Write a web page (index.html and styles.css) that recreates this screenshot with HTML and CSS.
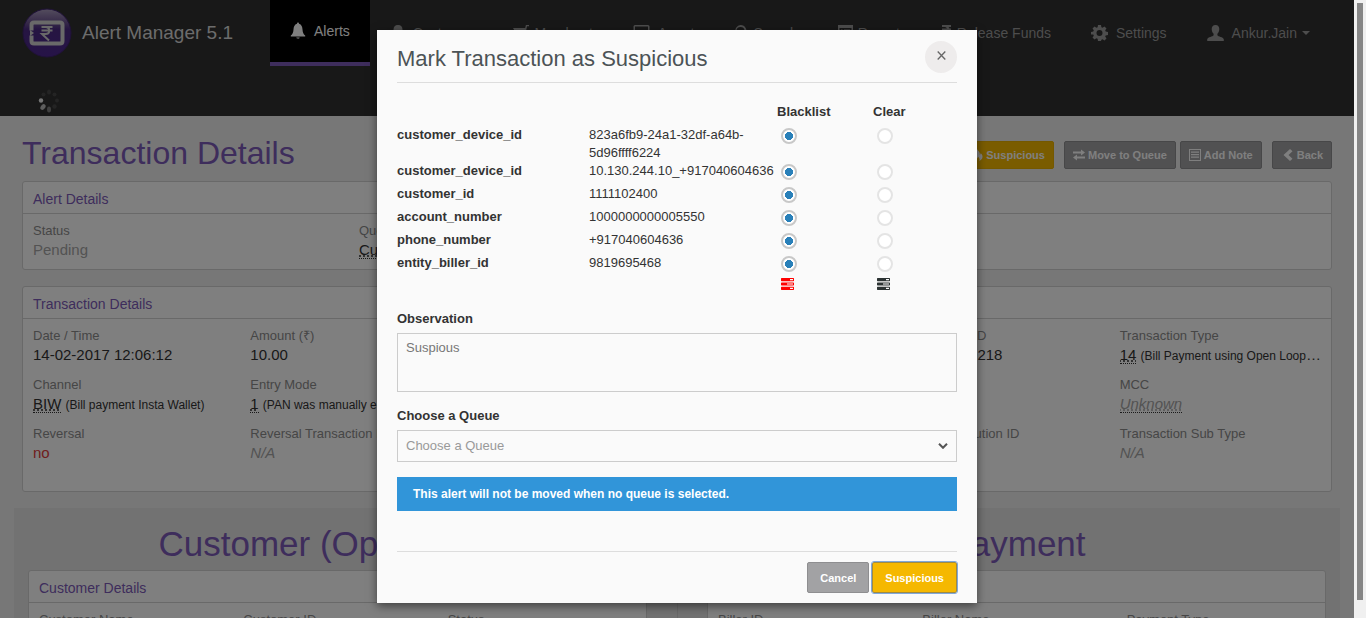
FILE: index.html
```html
<!DOCTYPE html>
<html lang="en">
<head>
<meta charset="utf-8">
<meta name="viewport" content="width=device-width, initial-scale=1">
<title>Alert Manager 5.1</title>
<link rel="stylesheet" href="styles.css">
</head>
<body>
<div class="screen">
  <div class="app">
    <header class="topbar">
      <div class="topbar-row">
        <a class="brand" href="#">
          <svg width="50" height="50" viewBox="0 0 50 50" aria-hidden="true">
            <defs><linearGradient id="orb" x1="0" y1="0" x2="0" y2="1"><stop offset="0" stop-color="#a99bbd"/><stop offset=".3" stop-color="#6a5090"/><stop offset=".42" stop-color="#4c2b84"/><stop offset="1" stop-color="#4d2790"/></linearGradient></defs>
            <circle cx="25" cy="25" r="24" fill="url(#orb)" stroke="#3f2370"/>
            <path d="M9.500 22.500V17q0-2.500 2.500-2.500h26q2.500 0 2.500 2.500v16q0 2.500-2.500 2.500H12q-2.500 0-2.500-2.500v-5.500" fill="none" stroke="#d2d2d2" stroke-width="4"/>
            <path d="M8 22l4 3-4 3z" fill="#d2d2d2"/>
            <path d="M19.500 19h11M19.500 22.500h11M20 19h3.500c5 0 5 7 0 7H20l7 6.500" fill="none" stroke="#d2d2d2" stroke-width="2"/>
          </svg>
          <span>Alert Manager 5.1</span>
        </a>
        <nav class="nav">
          <a class="nav-item active" href="#"><svg width="16" height="18" viewBox="0 0 16 18"><path d="M8 0.500c.8 0 1 .7 1 1.200 2.600.8 3.300 3 3.500 5.800.2 3 .8 4.600 2.700 6v1H.8v-1c1.900-1.400 2.500-3 2.700-6C3.700 4.700 4.400 2.500 7 1.700c0-.5.200-1.200 1-1.200zM6.300 15.500h3.400c-.3 1.600-3.100 1.600-3.400 0z"/></svg>Alerts</a>
          <a class="nav-item" href="#"><svg width="15" height="18" viewBox="0 0 15 18"><path d="M8 1c3 0 4.500 2 4.500 4.500S11 10 10 11v2l5 2v2H1v-2l5-2v-2C5 10 3.500 8 3.500 5.500S5 1 8 1z"/></svg>Customer</a>
          <a class="nav-item snug" href="#"><svg width="16" height="18" viewBox="0 0 16 18"><path d="M16 1v1.300h-2L12 12H3v-1.300h7.500l.3-1.400H3L0 4h12.200l.7-3zM4 14h2v2H4zM9 14h2v2H9z"/></svg>Merchant</a>
          <a class="nav-item" href="#"><svg width="17" height="18" viewBox="0 0 17 18"><path d="M2 1h13q1.500 0 1.500 1.500V12h-16V2.500Q.5 1 2 1zm0 1.500v8h13v-8zM0 13h17v2H0z"/></svg>Agent</a>
          <a class="nav-item snug" href="#"><svg width="14" height="18" viewBox="0 0 14 18"><path d="M6.500 1a6 6 0 0 1 5 9.300l3 4-1.700 1.700-3.500-3.400A6 6 0 1 1 6.500 1zm0 2a4 4 0 1 0 0 8 4 4 0 0 0 0-8z"/></svg>Search</a>
          <a class="nav-item snug" href="#"><svg width="15" height="18" viewBox="0 0 15 18"><path fill-rule="evenodd" d="M0 1h15v14H0zM1.500 4v9.500h12V4zM3 5.500h1.500V7H3zm3 0h6V7H6zM3 8.500h1.500V10H3zm3 0h6V10H6z"/></svg>Report</a>
          <a class="nav-item snug" href="#"><svg width="12" height="18" viewBox="0 0 12 18"><path d="M2 1h9v2H8.600q.6.700.8 1.500H11v2H9.300Q8.500 9 5.500 9.200l4.500 5H7L2 9V7.200h3q1.500 0 2-.7H2v-2h5Q6.400 3 5 3H2z"/></svg>Release Funds</a>
          <a class="nav-item" href="#"><svg width="17" height="18" viewBox="0 0 17 18"><path fill-rule="evenodd" d="M7 1h3l.4 2.200 1.200.5 1.900-1.300 2 2-1.300 1.900.5 1.200 2.300.5v3l-2.300.4-.5 1.200 1.300 1.900-2 2-1.900-1.300-1.200.5L10 17H7l-.4-2.200-1.200-.5-1.900 1.300-2-2 1.300-1.900-.5-1.200L0 10.500V8l2.300-.5.5-1.200-1.300-1.900 2-2 1.900 1.300 1.200-.5zM8.500 6a3 3 0 1 0 0 6 3 3 0 0 0 0-6z"/></svg>Settings</a>
          <a class="nav-item" href="#"><svg width="17" height="18" viewBox="0 0 17 18"><path d="M8.500 1c2.700 0 3.800 1.800 3.800 4 0 2.400-1 3.700-1.900 4.800v1.400c.8 1.400 5.600 1.700 6.400 4V17H.2v-1.800c.8-2.300 5.600-2.600 6.400-4V9.800C5.700 8.700 4.700 7.400 4.700 5c0-2.200 1.100-4 3.800-4z"/></svg>Ankur.Jain<span class="caret"></span></a>
        </nav>
      </div>
      <svg class="loader" width="22" height="24" viewBox="0 0 22 24" aria-label="Loading">
        <g fill="#484848"><ellipse cx="11" cy="3" rx="2" ry="2.500"/><circle cx="5.500" cy="5.500" r="2"/><circle cx="16.500" cy="5.500" r="2"/><circle cx="19" cy="11.500" r="2"/><circle cx="16.500" cy="17.500" r="2.200"/></g>
        <ellipse cx="11" cy="20.500" rx="2" ry="3" fill="#808080"/><ellipse cx="5" cy="18" rx="2.200" ry="3.200" transform="rotate(35 5 18)" fill="#bdbdbd"/><circle cx="3" cy="11.500" r="2.200" fill="#eee"/>
      </svg>
    </header>

    <main class="page">
      <div class="page-head">
        <h1>Transaction Details</h1>
        <div class="actions">
          <button class="btn btn-warn" type="button"><svg width="12" height="12" viewBox="0 0 12 12"><path d="M6 0c1 2 3.500 3 2.600 6 .9-.3 1.100-1.200 1-2C13 7 11.500 11 8 12c1.500-2 0-3-1-4.500C7 9 5 9.500 5.500 12 1 11 0 8 2 5c.2 1 .6 1.500 1.300 1.800C3 4 6 3 6 0z"/></svg>Suspicious</button>
          <button class="btn spaced" type="button"><svg width="12" height="12" viewBox="0 0 12 12"><path d="M0 2.500h8V.5l4 3-4 3v-2H0zM12 9.500H4v2l-4-3 4-3v2h8z"/></svg>Move to Queue</button>
          <button class="btn" type="button"><svg width="12" height="12" viewBox="0 0 12 12"><path fill-rule="evenodd" d="M0 0h12v12H0zM1 1v10h10V1zM2 2.500h8v1.200H2zM2 5h8v1.200H2zM2 7.500h8v1.200H2z"/></svg>Add Note</button>
          <button class="btn spaced" type="button"><svg width="13" height="12" viewBox="-2 0 13 12"><path d="M7 0l2.500 2.300L5.500 6l4 3.700L7 12 .5 6z"/></svg>Back</button>
        </div>
      </div>

      <section class="panel">
        <h2>Alert Details</h2>
        <dl class="fields four">
          <div><dt>Status</dt><dd class="muted">Pending</dd></div>
          <div><dt>Queue</dt><dd><abbr>Customer</abbr></dd></div>
        </dl>
      </section>

      <section class="panel tall">
        <h2>Transaction Details</h2>
        <dl class="fields six">
          <div><dt>Date / Time</dt><dd>14-02-2017 12:06:12</dd></div>
          <div><dt>Amount (₹)</dt><dd>10.00</dd></div>
          <div class="at-five"><dt>Transaction ID</dt><dd>704512000218</dd></div>
          <div><dt>Transaction Type</dt><dd><abbr>14</abbr> <small>(Bill Payment using Open Loop Wallet)</small></dd></div>
          <div><dt>Channel</dt><dd><abbr>BIW</abbr> <small>(Bill payment Insta Wallet)</small></dd></div>
          <div><dt>Entry Mode</dt><dd><abbr>1</abbr> <small>(PAN was manually entered)</small></dd></div>
          <div class="at-six"><dt>MCC</dt><dd class="muted"><abbr><i>Unknown</i></abbr></dd></div>
          <div><dt>Reversal</dt><dd class="no">no</dd></div>
          <div><dt>Reversal Transaction ID</dt><dd class="muted"><i>N/A</i></dd></div>
          <div class="at-five"><dt>Issuing Institution ID</dt></div>
          <div><dt>Transaction Sub Type</dt><dd class="muted"><i>N/A</i></dd></div>
        </dl>
      </section>

      <div class="parties">
        <section class="party">
          <h3>Customer (Open Loop)</h3>
          <div class="panel">
            <h2>Customer Details</h2>
            <dl class="fields three">
              <div><dt>Customer Name</dt></div><div><dt>Customer ID</dt></div><div><dt>Status</dt></div>
            </dl>
          </div>
        </section>
        <section class="party">
          <h3>Payment</h3>
          <div class="panel">
            <h2>Biller Details</h2>
            <dl class="fields three">
              <div><dt>Biller ID</dt></div><div><dt>Biller Name</dt></div><div><dt>Payment Type</dt></div>
            </dl>
          </div>
        </section>
      </div>
    </main>

    <div class="backdrop">
      <form class="modal" role="dialog" aria-labelledby="dialog-title">
        <div class="modal-head">
          <h2 id="dialog-title">Mark Transaction as Suspicious</h2>
          <button class="close" type="button" aria-label="Close"><svg width="9" height="9" viewBox="0 0 9 9"><path d="M.7.500l7.600 8M8.300.500l-7.600 8" fill="none" stroke="#666" stroke-width="1.300"/></svg></button>
        </div>
        <table class="entities">
          <colgroup><col class="c-name"><col class="c-value"><col class="c-black"><col></colgroup>
          <thead><tr><td></td><td></td><th scope="col">Blacklist</th><th scope="col">Clear</th></tr></thead>
          <tbody>
            <tr><th scope="row">customer_device_id</th><td>823a6fb9-24a1-32df-a64b-5d96ffff6224</td><td class="pick"><input type="radio" name="e1" aria-label="Blacklist first customer_device_id" checked></td><td class="pick"><input type="radio" name="e1" aria-label="Clear first customer_device_id"></td></tr>
            <tr><th scope="row">customer_device_id</th><td>10.130.244.10_+917040604636</td><td class="pick"><input type="radio" name="e2" aria-label="Blacklist second customer_device_id" checked></td><td class="pick"><input type="radio" name="e2" aria-label="Clear second customer_device_id"></td></tr>
            <tr><th scope="row">customer_id</th><td>1111102400</td><td class="pick"><input type="radio" name="e3" aria-label="Blacklist customer_id" checked></td><td class="pick"><input type="radio" name="e3" aria-label="Clear customer_id"></td></tr>
            <tr><th scope="row">account_number</th><td>1000000000005550</td><td class="pick"><input type="radio" name="e4" aria-label="Blacklist account_number" checked></td><td class="pick"><input type="radio" name="e4" aria-label="Clear account_number"></td></tr>
            <tr><th scope="row">phone_number</th><td>+917040604636</td><td class="pick"><input type="radio" name="e5" aria-label="Blacklist phone_number" checked></td><td class="pick"><input type="radio" name="e5" aria-label="Clear phone_number"></td></tr>
            <tr><th scope="row">entity_biller_id</th><td>9819695468</td><td class="pick"><input type="radio" name="e6" aria-label="Blacklist entity_biller_id" checked></td><td class="pick"><input type="radio" name="e6" aria-label="Clear entity_biller_id"></td></tr>
          </tbody>
          <tfoot><tr><td></td><td></td>
            <td class="all"><button class="all-red" type="button" aria-label="Blacklist all"><svg width="13" height="12" viewBox="0 0 13 12"><path fill-rule="evenodd" d="M.5 0h12l.5.500v2.200l-.5.500H.5L0 2.700V.5zM9 1v1.200h3V1zM.5 4.400h12l.5.500v2.200l-.5.500H.5L0 7.100V4.900zM6 5.400v1.200h6V5.400zM.5 8.800h12l.5.500v2.200l-.5.500H.5l-.5-.5V9.300zM9 9.800V11h3V9.800z"/></svg></button></td>
            <td class="all"><button type="button" aria-label="Clear all"><svg width="13" height="12" viewBox="0 0 13 12"><path fill-rule="evenodd" d="M.5 0h12l.5.500v2.200l-.5.500H.5L0 2.700V.5zM9 1v1.200h3V1zM.5 4.400h12l.5.500v2.200l-.5.500H.5L0 7.100V4.900zM6 5.400v1.200h6V5.400zM.5 8.800h12l.5.500v2.200l-.5.500H.5l-.5-.5V9.300zM9 9.800V11h3V9.800z"/></svg></button></td>
          </tr></tfoot>
        </table>
        <label for="observation">Observation</label>
        <textarea id="observation">Suspious</textarea>
        <label for="queue">Choose a Queue</label>
        <div class="select-box">
          <select id="queue"><option>Choose a Queue</option></select>
          <svg width="10" height="6" viewBox="0 0 10 6" aria-hidden="true"><path d="M1 .8l4 4 4-4" fill="none" stroke="#555" stroke-width="2"/></svg>
        </div>
        <p class="notice">This alert will not be moved when no queue is selected.</p>
        <div class="modal-foot">
          <button class="btn big" type="button">Cancel</button>
          <button class="btn big btn-warn focused" type="submit">Suspicious</button>
        </div>
      </form>
    </div>
  </div>
  <div class="scroll-track"><div class="scroll-thumb"></div></div>
</div>
</body>
</html>
```

FILE: styles.css
```css
* { box-sizing: border-box; }

body {
  margin: 0;
  font-family: "Liberation Sans", Arial, sans-serif;
  font-size: 13px;
  line-height: 18px;
  color: #333;
}

h1, h2, h3, dl, dd, p { margin: 0; font-weight: normal; }
a { color: inherit; text-decoration: none; }
button, textarea, select { font: inherit; }

.screen { display: flex; height: 100vh; }
.app { position: relative; flex: 1; min-width: 0; overflow: hidden; background: #efefef; }

/* Top bar */
.topbar { height: 116px; background: #303030; }
.topbar-row { display: flex; }
.brand { display: flex; align-items: center; gap: 10px; width: 270px; height: 66px; padding-left: 22px; font-size: 19px; color: #d8d8d8; white-space: nowrap; }
.nav { display: flex; white-space: nowrap; }
.nav-item { display: flex; align-items: center; gap: 8px; height: 66px; padding: 0 20px; font-size: 14px; color: #9a9a9a; fill: currentColor; }
.nav-item.snug { gap: 5px; }
.nav-item.active { background: #000; color: #fff; border-bottom: 4px solid #7c5ab8; }
.caret { margin-left: -3px; border: 4px solid transparent; border-top-color: currentColor; border-bottom: 0; }
.loader { display: block; margin: 23px 0 0 38px; }

/* Page */
.page { padding: 18px 14px 0; }
.page-head { display: flex; justify-content: space-between; align-items: flex-start; height: 47px; padding: 0 8px; }
h1 { font-size: 32px; line-height: 38px; color: #7c5ab8; }
.actions { display: flex; gap: 4px; padding-top: 7px; }
.spaced { margin-left: 6px; }

.btn { display: inline-flex; align-items: center; justify-content: center; gap: 3px; height: 28px; padding: 0 8px; border: 1px solid #8e8e90; border-radius: 2px; background: #a2a2a4; color: #fff; fill: #fff; font-size: 11px; font-weight: bold; white-space: nowrap; }
.btn-warn { background: #f5b800; border-color: #e9b000; }

.panel { margin: 0 8px 16px; background: #fff; border: 1px solid #d2d2d2; border-radius: 3px; }
.panel h2 { padding: 8px 10px 5px; font-size: 14px; line-height: 18px; color: #7c5ab8; border-bottom: 1px solid #d2d2d2; }
.fields { display: grid; row-gap: 11px; padding: 8px 0 9px 10px; margin-right: -6px; }
.tall .fields { padding-bottom: 28px; }
.three { grid-template-columns: repeat(3, minmax(0, 1fr)); }
.four { grid-template-columns: repeat(4, minmax(0, 1fr)); }
.six { grid-template-columns: repeat(6, minmax(0, 1fr)); }
.at-five { grid-column: 5; }
.at-six { grid-column: 6; }
dt { color: #8c8c8c; white-space: nowrap; }
dd { padding-right: 16px; font-size: 15px; line-height: 20px; white-space: nowrap; overflow: hidden; text-overflow: ellipsis; }
dd small { font-size: 12px; line-height: 12px; }
abbr { border-bottom: 1px dotted #333; text-decoration: underline dotted; }
.muted { color: #a6a6a6; }
.no { color: #e03c3c; }

.parties { display: grid; grid-template-columns: 1fr 1fr; background: #e5e5e5; }
.party { padding: 16px 30px 60px 14px; }
.party + .party { padding: 16px 14px 60px 29px; border-left: 1px solid #d2d2d2; }
.party h3 { padding-bottom: 6px; font-size: 35px; line-height: 40px; color: #7c5ab8; text-align: center; }
.party .panel { margin: 0; }

/* Dialog */
.backdrop { position: absolute; inset: 0; padding: 30px 0; background: rgba(0, 0, 0, .5); }
.modal { max-width: 600px; margin: 0 auto; padding: 0 20px 10px; background: #fafafa; box-shadow: 0 3px 9px rgba(0, 0, 0, .5); }
.modal-head { display: flex; align-items: center; justify-content: space-between; height: 53px; margin-bottom: 20px; padding-top: 2px; border-bottom: 1px solid #ddd; }
.modal-head h2 { padding-top: 4px; font-size: 22px; line-height: 28px; color: #4c5356; }
.close { display: flex; align-items: center; justify-content: center; width: 32px; height: 32px; padding: 0 0 3px; border: 0; border-radius: 50%; background: #eeecec; }

.entities { width: 100%; table-layout: fixed; border-collapse: collapse; margin-bottom: 18px; }
.entities th, .entities td { padding: 0; text-align: left; vertical-align: top; }
.entities thead tr, .entities tbody tr { height: 23px; }
.c-name { width: 192px; }
.c-value { width: 188px; }
.c-black { width: 96px; }
.entities .pick { padding: 2px 0 0 4px; line-height: 0; }
.entities .all { padding: 1px 0 2px 4px; line-height: 0; }
.pick input { appearance: none; width: 16px; height: 16px; margin: 0; border: 2px solid #e4e4e4; border-radius: 50%; background: #fff; }
.pick input:checked { border-color: #c8c8c8; background: radial-gradient(circle, #2980b9 4px, #fff 4px); }
.all button { display: block; padding: 0; border: 0; background: none; fill: #2c3333; }
.all .all-red { fill: #f00; }

.modal label { display: block; margin-bottom: 5px; font-weight: bold; }
textarea, select { display: block; width: 100%; padding: 5px 8px; border: 1px solid #ccc; border-radius: 0; background: #fafafa; color: #777; }
textarea { height: 59px; margin-bottom: 15px; resize: none; }
.select-box { position: relative; margin-bottom: 15px; }
select { height: 32px; appearance: none; color: #999; }
.select-box svg { position: absolute; right: 9px; top: 13px; }
.notice { padding: 8px 16px; background: #3195d9; color: #fff; font-size: 12px; font-weight: bold; }
.modal-foot { display: flex; justify-content: flex-end; gap: 3px; margin-top: 40px; padding-top: 10px; border-top: 1px solid #ddd; }
.big { height: 31px; padding: 0 12px; }
.focused { border-color: #a08a40; outline: 1px solid #7fa8dc; }

/* Scrollbar */
.scroll-track { width: 12px; padding: 3px; background: #f0f0f0; }
.scroll-thumb { height: calc(100% - 15px); background: #868686; }
```
